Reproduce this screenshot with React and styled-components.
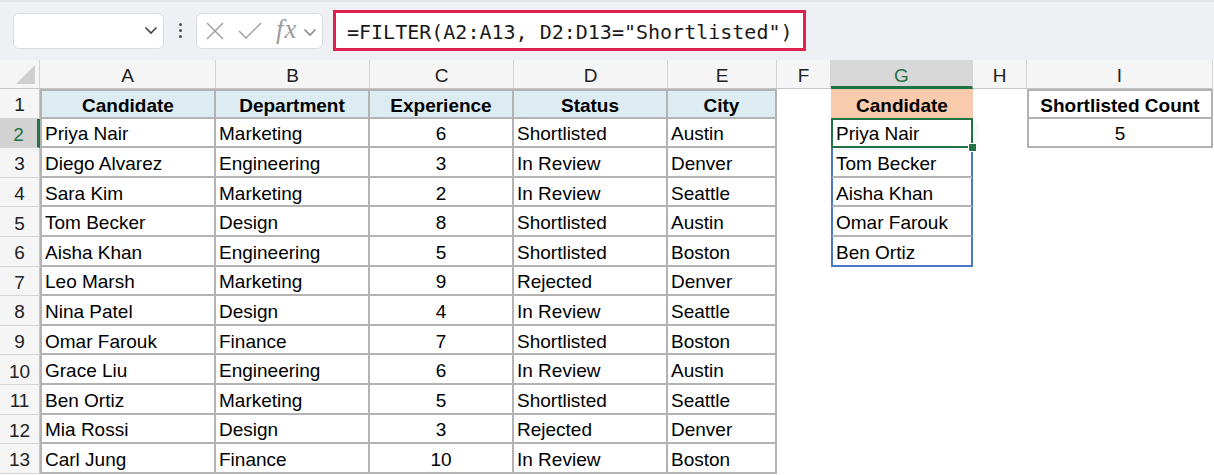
import React from 'react';
import styled, { createGlobalStyle } from 'styled-components';

const GlobalStyle = createGlobalStyle`
  html, body { margin: 0; padding: 0; background: #fff; }
  body { font-family: "Liberation Sans", Arial, sans-serif; overflow: hidden; }
`;

const Page = styled.div`
  width: 1214px;
  height: 475px;
  overflow: hidden;
  background: #fff;
`;

// formula bar strip
const Toolbar = styled.div`
  height: 60px;
  box-sizing: border-box;
  background: #eef0f3;
  border-top: 2px solid #e2e4e8;
  display: flex;
  align-items: center;
  padding-left: 13px;
  padding-bottom: 1px;
`;

const NameBox = styled.div`
  width: 151px;
  height: 36px;
  box-sizing: border-box;
  background: #fff;
  border: 1px solid #d9dce0;
  border-radius: 6px;
  display: flex;
  align-items: center;
  justify-content: flex-end;
  padding-right: 5px;
`;

const Dots = styled.div`
  width: 32px;
  display: flex;
  flex-direction: column;
  align-items: center;
  gap: 3px;
  span {
    width: 3px;
    height: 3px;
    border-radius: 50%;
    background: #505050;
  }
`;

const FxBox = styled.div`
  width: 127px;
  height: 36px;
  box-sizing: border-box;
  background: #fff;
  border: 1px solid #d9dce0;
  border-radius: 6px;
  display: flex;
  align-items: center;
  padding-left: 8px;
`;

const FxText = styled.span`
  font-family: "Liberation Serif", "DejaVu Serif", serif;
  font-style: italic;
  font-size: 27px;
  color: #9c9c9c;
  margin-left: 13px;
  margin-top: -3px;
  letter-spacing: 1px;
`;

const FormulaBox = styled.div`
  margin-left: 10px;
  width: 473px;
  height: 41px;
  box-sizing: border-box;
  background: #fff;
  border: 3px solid #df2150;
  display: flex;
  align-items: center;
  padding: 2px 0 0 11px;
  font-family: "DejaVu Sans Mono", "Liberation Mono", monospace;
  font-size: 20px;
  color: #1a1a1a;
  white-space: nowrap;
`;

const Chevron = ({ w = 14, color = '#555' }) => (
  <svg width={w} height="9" viewBox="0 0 14 9">
    <polyline points="1.5,1.5 7,7 12.5,1.5" fill="none" stroke={color} strokeWidth="1.6" />
  </svg>
);

// sheet grid
const Sheet = styled.div`
  display: grid;
  grid-template-columns: 40px 176px 154px 144px 154px 109px 54px 142px 54px 186px;
  grid-template-rows: 29px repeat(13, 29.6px);
  font-size: 19px;
  color: #000;
`;

const Corner = styled.div`
  background: #f5f5f5;
  border-right: 1px solid #d4d4d4;
  border-bottom: 1px solid #c6c6c6;
  position: relative;
  &::after {
    content: '';
    position: absolute;
    right: 4px;
    bottom: 4px;
    width: 0;
    height: 0;
    border-left: 19px solid transparent;
    border-bottom: 19px solid #cfcfcf;
  }
`;

const ColHead = styled.div`
  display: flex;
  align-items: center;
  justify-content: center;
  background: ${p => (p.$active ? '#d8d8d8' : '#f5f5f5')};
  color: ${p => (p.$active ? '#217346' : '#222')};
  border-right: 1px solid #d4d4d4;
  border-bottom: ${p => (p.$active ? '3px solid #217346' : '1px solid #c6c6c6')};
  box-sizing: border-box;
  padding-top: ${p => (p.$active ? '5px' : '3px')};
`;

const RowHead = styled.div`
  display: flex;
  align-items: center;
  justify-content: center;
  background: ${p => (p.$active ? '#d3d3d3' : '#f5f5f5')};
  color: ${p => (p.$active ? '#217346' : '#222')};
  border-bottom: 1px solid #d4d4d4;
  border-right: ${p => (p.$active ? '3px solid #217346' : '1px solid #c6c6c6')};
  box-sizing: border-box;
  padding-top: 4px;
`;

const line = c => (c ? `2px solid ${c}` : 'none');

const Cell = styled.div`
  position: relative;
  display: flex;
  align-items: center;
  justify-content: ${p => (p.$align === 'center' ? 'center' : 'flex-start')};
  box-sizing: border-box;
  padding: 4px 3px 0;
  background: ${p => p.$bg || '#fff'};
  font-weight: ${p => (p.$bold ? 700 : 400)};
  white-space: nowrap;
  border-top: ${p => line(p.$bt)};
  border-right: ${p => line(p.$br)};
  border-bottom: ${p => line(p.$bb)};
  border-left: ${p => line(p.$bl)};
  box-shadow: ${p => (p.$spill ? '4px 3px 5px rgba(0, 0, 0, 0.05)' : 'none')};
  z-index: ${p => (p.$top ? 2 : 0)};
`;

const Selection = styled.div`
  position: absolute;
  left: -2px;
  top: -1px;
  right: -2px;
  bottom: -2px;
  border: 2px solid #217346;
  pointer-events: none;
`;

const FillHandle = styled.div`
  position: absolute;
  right: -6px;
  bottom: -6px;
  width: 7px;
  height: 7px;
  background: #217346;
  border: 1px solid #fff;
`;

const GRID = '#b3b3b3';
const BLUE = '#4a78c6';

const headers = ['Candidate', 'Department', 'Experience', 'Status', 'City'];

const rows = [
  ['Priya Nair', 'Marketing', 6, 'Shortlisted', 'Austin'],
  ['Diego Alvarez', 'Engineering', 3, 'In Review', 'Denver'],
  ['Sara Kim', 'Marketing', 2, 'In Review', 'Seattle'],
  ['Tom Becker', 'Design', 8, 'Shortlisted', 'Austin'],
  ['Aisha Khan', 'Engineering', 5, 'Shortlisted', 'Boston'],
  ['Leo Marsh', 'Marketing', 9, 'Rejected', 'Denver'],
  ['Nina Patel', 'Design', 4, 'In Review', 'Seattle'],
  ['Omar Farouk', 'Finance', 7, 'Shortlisted', 'Boston'],
  ['Grace Liu', 'Engineering', 6, 'In Review', 'Austin'],
  ['Ben Ortiz', 'Marketing', 5, 'Shortlisted', 'Seattle'],
  ['Mia Rossi', 'Design', 3, 'Rejected', 'Denver'],
  ['Carl Jung', 'Finance', 10, 'In Review', 'Boston'],
];

const shortlisted = rows.filter(r => r[3] === 'Shortlisted').map(r => r[0]);

function spillCell(r) {
  // r is the sheet row number
  if (r === 1) {
    return <Cell $align="center" $bold $bg="#f8cbad">Candidate</Cell>;
  }
  const i = r - 2;
  if (i < shortlisted.length) {
    const last = i === shortlisted.length - 1;
    return (
      <Cell $bl={BLUE} $br={BLUE} $bb={last ? BLUE : GRID} $top={i === 0} $spill>
        {shortlisted[i]}
        {i === 0 && (
          <Selection>
            <FillHandle />
          </Selection>
        )}
      </Cell>
    );
  }
  return <Cell />;
}

function countCell(r) {
  if (r === 1) {
    return <Cell $align="center" $bold $bt={GRID} $bl={GRID} $br={GRID} $bb={GRID}>Shortlisted Count</Cell>;
  }
  if (r === 2) {
    return <Cell $align="center" $bl={GRID} $br={GRID} $bb={GRID}>{shortlisted.length}</Cell>;
  }
  return <Cell />;
}

function tableCell(r, c, value) {
  const head = r === 1;
  return (
    <Cell
      key={c}
      $align={head || c === 2 ? 'center' : 'left'}
      $bold={head}
      $bg={head ? '#ddebf3' : '#fff'}
      $bt={head ? GRID : null}
      $bl={c === 0 ? GRID : null}
      $br={GRID}
      $bb={GRID}
    >
      {value}
    </Cell>
  );
}

export default function App() {
  const letters = ['A', 'B', 'C', 'D', 'E', 'F', 'G', 'H', 'I'];
  const allRows = [headers, ...rows];

  return (
    <Page>
      <GlobalStyle />
      <Toolbar>
        <NameBox>
          <Chevron color="#444" />
        </NameBox>
        <Dots>
          <span />
          <span />
          <span />
        </Dots>
        <FxBox>
          <svg width="20" height="20" viewBox="0 0 20 20">
            <path d="M2 2 L18 18 M18 2 L2 18" stroke="#a0a0a0" strokeWidth="1.5" fill="none" />
          </svg>
          <svg width="26" height="20" viewBox="0 0 26 20" style={{ marginLeft: 12 }}>
            <polyline points="2,10 9,17 24,2" stroke="#a0a0a0" strokeWidth="1.5" fill="none" />
          </svg>
          <FxText>fx</FxText>
          <span style={{ marginLeft: 5, marginTop: 2 }}>
            <Chevron w={14} color="#8c8c8c" />
          </span>
        </FxBox>
        <FormulaBox>=FILTER(A2:A13, D2:D13="Shortlisted")</FormulaBox>
      </Toolbar>

      <Sheet>
        <Corner />
        {letters.map(l => (
          <ColHead key={l} $active={l === 'G'}>{l}</ColHead>
        ))}

        {allRows.map((row, idx) => {
          const r = idx + 1;
          return (
            <React.Fragment key={r}>
              <RowHead $active={r === 2}>{r}</RowHead>
              {row.map((v, c) => tableCell(r, c, v))}
              <Cell />
              {spillCell(r)}
              <Cell />
              {countCell(r)}
            </React.Fragment>
          );
        })}
      </Sheet>
    </Page>
  );
}
